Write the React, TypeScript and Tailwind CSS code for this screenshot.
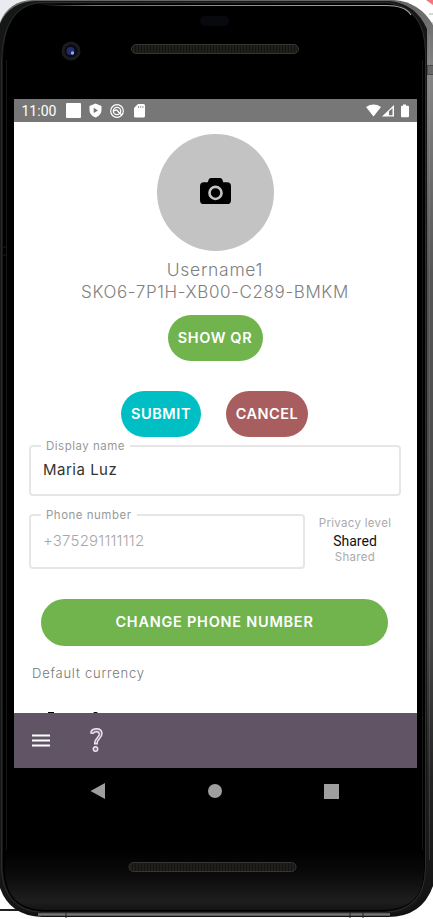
import type { ReactNode } from 'react';

function DeviceFrame() {
  return (
    <svg className="absolute inset-0" width="433" height="919" viewBox="0 0 433 919" aria-hidden="true">
      <defs>
        <linearGradient id="chin" x1="0" y1="0" x2="0" y2="1">
          <stop offset="0" stopColor="#000" />
          <stop offset="0.4" stopColor="#0a0a0a" />
          <stop offset="0.85" stopColor="#1e1e1e" />
          <stop offset="1" stopColor="#141414" />
        </linearGradient>
        <linearGradient id="side" x1="0" y1="0" x2="0" y2="1">
          <stop offset="0" stopColor="#666" />
          <stop offset="0.08" stopColor="#858585" />
          <stop offset="0.3" stopColor="#555" />
          <stop offset="0.7" stopColor="#444" />
          <stop offset="0.85" stopColor="#222" />
          <stop offset="1" stopColor="#111" />
        </linearGradient>
        <linearGradient id="shine" x1="0" y1="0" x2="1" y2="0">
          <stop offset="0" stopColor="#777" stopOpacity="0" />
          <stop offset="0.15" stopColor="#777" />
          <stop offset="1" stopColor="#aaa" />
        </linearGradient>
        <pattern id="grille" width="3" height="11" patternUnits="userSpaceOnUse">
          <rect width="3" height="11" fill="#211f1b" />
          <rect width="1" height="11" fill="#141311" />
        </pattern>
      </defs>
      <rect width="433" height="919" fill="#fff" />
      <path d="M0 0h28Q8 5 0 22z" fill="#e9ebee" />
      <path d="M426 0h7v5z" fill="#f2777b" />
      <path d="M429 14h4M430 23h3" stroke="#aaa" />
      <path d="M0 910h25" stroke="#222" strokeWidth="2" />
      <path d="M0 22Q9 1 32 0H394Q420 2 433 25V886Q422 917 388 917H42Q10 916 0 888z" fill="url(#side)" />
      <path d="M0 24Q9 2 36 1H390Q416 4 427 29V872Q426 914 388 914H42Q4 914 0 880z" fill="#151717" />
      <path d="M3 60Q4 8 38 3.500H388Q424 8 425 52V868Q425 909 384 911.500H42Q4 909 3 868z" fill="#000" />
      <path d="M5 850H424V871Q423 909 384 910H44Q6 909 5 871z" fill="url(#chin)" />
      <path d="M1.500 868V60Q3 8 38 2.500H388Q425 8 425.500 52V868Q425 911 384 912.500H42Q3 910 1.500 868z" fill="none" stroke="#2b2d2d" />
      <path d="M36 3Q46 5 62 5.500H384Q405 5 411 15" fill="none" stroke="url(#shine)" strokeWidth="1.200" />
      <path d="M6.500 60V850M422.500 60V850" stroke="#161616" />
      <path d="M429.500 35V860" stroke="#aaa" strokeOpacity="0.2" />
      <path d="M38 914.500H390" stroke="#777" strokeWidth="2.500" />
      <path d="M66 913v5M350 912v6M363 912v6" stroke="#222" />
      <rect x="427.500" y="65.500" width="6" height="9" fill="#666" stroke="#4a4a4a" />
      <path d="M0 247h7M0 255h7M430 835h3" stroke="#1c1c1c" />
      <rect x="200" y="16" width="29" height="10" rx="5" fill="#07090e" />
      <circle cx="71" cy="51" r="9.500" fill="#1b1b1c" />
      <circle cx="71" cy="51" r="6.500" fill="#080a19" />
      <circle cx="70.500" cy="51" r="4" fill="#222d68" />
      <circle cx="72.500" cy="53" r="1.700" fill="#91a6ef" />
      <rect x="131.500" y="44.500" width="167" height="9" rx="4.500" fill="url(#grille)" stroke="#383632" />
      <rect x="129" y="862.500" width="167" height="9" rx="4.500" fill="url(#grille)" stroke="#383632" />
    </svg>
  );
}

function StatusBar() {
  return (
    <header className="flex h-[23px] shrink-0 items-center bg-[#777] pl-[7.500px] text-white">
      <span className="w-[44.500px] pt-px font-[Roboto] text-[14px]">11:00</span>
      <span className="size-[15px] rounded-[1px] bg-white" />
      <svg className="ml-[8px]" width="13" height="15" viewBox="0 0 13 15">
        <path d="M6.500.5 12.500 3v4c0 3.500-2.500 6-6 7.500C3 13 .5 10.500.5 7V3z" fill="#fff" />
        <path d="M4.700 4.800v5.200L9 7.400z" fill="#777" />
      </svg>
      <svg className="ml-[8px]" width="14" height="14" viewBox="0 0 14 14" fill="none" stroke="#fff">
        <circle cx="7" cy="7" r="6.300" strokeWidth="1.200" />
        <circle cx="7" cy="7" r="3.700" strokeWidth="1.300" />
        <path d="M4 7c2.500-2 3.500-.5 4.500 1l3.500 3" strokeWidth="1.400" />
      </svg>
      <svg className="ml-[10px]" width="11" height="14" viewBox="0 0 11 14">
        <path d="M4 0h5.500Q11 0 11 1.500V12q0 1.500-1.500 1.500h-8Q0 13.500 0 12V4z" fill="#fff" />
        <path d="M4.500 2v2M6.700 2v2M8.900 2v2" stroke="#999" />
      </svg>
      <svg className="mr-[7.500px] ml-auto" width="45" height="14" viewBox="0 0 45 14">
        <path d="M1 3Q8.500-1.800 16 3L8.500 12.500z" fill="#fff" />
        <path d="M17 12.500 29 1v11.500z" fill="#fff" />
        <path d="M24 7.300 27.500 4.300V11.200H24z" fill="#777" />
        <path d="M38 .500h3v1.300h2q1 0 1 1v9.400q0 1-1 1h-6q-1 0-1-1V2.800q0-1 1-1h1z" fill="#fff" />
      </svg>
    </header>
  );
}

function Field({ label, className, children }: { label: string; className: string; children: ReactNode }) {
  return (
    <fieldset className={`relative rounded-[4px] border-2 border-[#e6e6e6] pl-[12px] ${className}`}>
      <span className="absolute -top-[9px] left-[10px] bg-white px-[5px] text-[11.500px] leading-[16px] tracking-[0.5px] whitespace-nowrap text-[#999]">
        {label}
      </span>
      {children}
    </fieldset>
  );
}

const pill = 'flex shrink-0 items-center justify-center rounded-full text-[14.500px] font-semibold whitespace-nowrap text-white';

export default function App() {
  return (
    <div className="relative flex h-[919px] w-[433px] flex-col overflow-hidden bg-white font-[Inter,sans-serif]">
      <DeviceFrame />
      <div className="relative ml-[14px] mt-[99px] flex h-[669px] w-[403px] shrink-0 flex-col overflow-hidden bg-white">
        <StatusBar />
        <main className="flex h-[591px] shrink-0 flex-col overflow-hidden">
          <div className="mt-[12px] flex size-[117px] shrink-0 items-center justify-center self-center rounded-full bg-[#c3c3c3]">
            <svg className="mr-px mb-[3px]" width="31" height="28" viewBox="0 0 32 28">
              <path d="M4 5h4l1-3Q10 .5 11.500.500h9q1.500 0 2.500 1.500L24 5h4q4 0 4 4v14.500q0 4-4 4H4q-4 0-4-4V9q0-4 4-4z" fill="#000" />
              <circle cx="16" cy="16" r="6.200" fill="none" stroke="#c3c3c3" strokeWidth="2.700" />
            </svg>
          </div>
          <div className="mt-[7px] mr-[1px] text-center text-[17.500px] leading-[23px] font-light tracking-[0.7px] text-[#808080]">Username1</div>
          <div className="mr-px text-center text-[17px] leading-[23px] font-light tracking-[0.62px] whitespace-nowrap text-[#808080]">SKO6-7P1H-XB00-C289-BMKM</div>
          <button className={`${pill} mt-[11px] mr-px h-[46px] w-[95px] self-center bg-[#71b34c] tracking-[0.6px]`}>SHOW QR</button>
          <div className="mt-[30px] flex shrink-0 pl-[107px]">
            <button className={`${pill} h-[46px] w-[80px] bg-[#00bfc4] tracking-[0.6px]`}>SUBMIT</button>
            <button className={`${pill} ml-[25px] h-[46px] w-[82px] bg-[#a85d5e] tracking-[0.5px]`}>CANCEL</button>
          </div>
          <Field label="Display name" className="mt-[8px] ml-[15px] h-[51px] w-[372px] shrink-0">
            <div className="mt-[13px] text-[15px] leading-[20px] tracking-[0.5px] text-[#333]">Maria Luz</div>
          </Field>
          <div className="mt-[18px] flex h-[55px] shrink-0 pl-[15px]">
            <Field label="Phone number" className="h-[55px] w-[276px] shrink-0">
              <div className="mt-[15px] text-[15px] leading-[20px] font-light tracking-[0.2px] text-[#a8a8a8]">+375291111112</div>
            </Field>
            <div className="ml-[14px] flex w-[72px] flex-col items-center text-[11.500px] whitespace-nowrap text-[#aaa]">
              <span className="mt-[1px] leading-[17px] tracking-[0.3px]">Privacy level</span>
              <span className="font-[Roboto] text-[14px] leading-[18px] text-[#111]">Shared</span>
              <span className="leading-[15px] tracking-[0.3px]">Shared</span>
            </div>
          </div>
          <button className={`${pill} mt-[30px] ml-[27px] h-[47px] w-[347px] bg-[#71b34c] pb-px tracking-[0.75px]`}>CHANGE PHONE NUMBER</button>
          <div className="mt-[17px] ml-[18px] text-[13px] leading-[20px] font-light tracking-[0.78px] text-[#777]">Default currency</div>
          <div className="mt-[29px] ml-[34px] flex items-end gap-[39px]">
            <span className="h-[2px] w-[6px] bg-black" />
            <span className="h-[2px] w-[5px] rounded-t-full bg-black" />
          </div>
        </main>
        <footer className="flex h-[55px] shrink-0 items-center bg-[#615464] pl-[18px]">
          <svg width="18" height="13" viewBox="0 0 18 13" stroke="#fff" strokeWidth="2">
            <path d="M0 1.500h18M0 6.500h18M0 11.500h18" />
          </svg>
          <svg className="ml-[40px] -mt-px" width="13" height="25" viewBox="0 0 13 25" fill="#85778a" stroke="#efe6ef" strokeWidth="1.400">
            <path d="M1 5V3.500C2 1.500 4 .8 6.500.8c3.500 0 5.500 2 5.500 5 0 4-5.500 6-4.800 10H4.700C4 11 9.500 9 9.300 6 9 3.200 5 3 3.300 5.200z" />
            <circle cx="5.500" cy="21" r="2.200" />
          </svg>
        </footer>
      </div>
      <nav className="relative mt-[15px] ml-[90px] flex h-[16px] w-[250px] shrink-0 items-center">
        <svg width="15" height="16" viewBox="0 0 15 16"><path d="M.5 8 15 0v16z" fill="#9e9e9e" /></svg>
        <span className="ml-[103px] size-[14px] rounded-full bg-[#9e9e9e]" />
        <span className="ml-[102px] size-[15px] bg-[#9e9e9e]" />
      </nav>
    </div>
  );
}
